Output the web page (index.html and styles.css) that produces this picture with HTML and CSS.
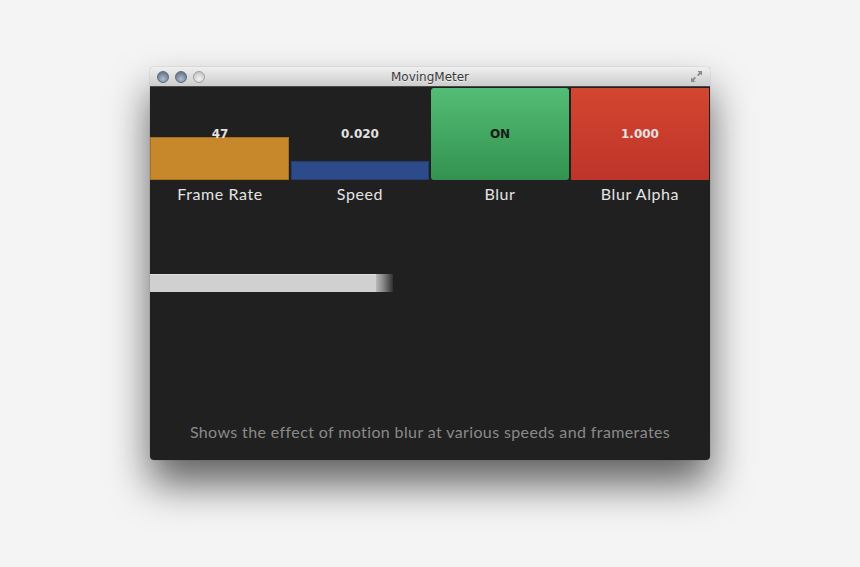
FILE: index.html
```html
<!DOCTYPE html>
<html lang="en">
<head>
    <meta charset="UTF-8">
    <title>MovingMeter</title>
    <link rel="stylesheet" href="styles.css">
</head>
<body>

<div class="window">
    <div class="titlebar">
        <div class="lights">
            <span class="light"></span>
            <span class="light"></span>
            <span class="light off"></span>
        </div>
        <div class="title">MovingMeter</div>
        <div class="resize">
            <svg width="13" height="13" viewBox="0 0 13 13">
                <path d="M7.5 1h4.5v4.5l-1.5-1.5-2.2 2.2-1.3-1.3 2.2-2.2z" fill="#8a8a8a"/>
                <path d="M5.5 12H1V7.5l1.5 1.5 2.2-2.2 1.3 1.3-2.2 2.2z" fill="#8a8a8a"/>
            </svg>
        </div>
    </div>

    <div class="content">
        <div class="meters">
            <div class="meter">
                <div class="cell">
                    <div class="bar bar-rate"></div>
                    <div class="value">47</div>
                </div>
                <div class="label">Frame Rate</div>
            </div>
            <div class="meter">
                <div class="cell">
                    <div class="bar bar-speed"></div>
                    <div class="value">0.020</div>
                </div>
                <div class="label">Speed</div>
            </div>
            <div class="meter">
                <div class="cell">
                    <div class="bar bar-blur"></div>
                    <div class="value dark">ON</div>
                </div>
                <div class="label">Blur</div>
            </div>
            <div class="meter">
                <div class="cell">
                    <div class="bar bar-alpha"></div>
                    <div class="value">1.000</div>
                </div>
                <div class="label">Blur Alpha</div>
            </div>
        </div>

        <div class="mover">
            <div class="mover-body"></div>
            <div class="mover-trail"></div>
        </div>

        <p class="caption">Shows the effect of motion blur at various speeds and framerates</p>
    </div>
</div>

</body>
</html>
```

FILE: styles.css
```css
body {
    margin: 0;
    background-color: #f4f4f4;
    font-family: 'Lato', 'DejaVu Sans', sans-serif;
    height: 567px;
    overflow: hidden;
}

.window {
    width: 560px;
    margin: 67px auto 0 auto;
    border-radius: 4px;
    box-shadow: 0 24px 40px rgba(0,0,0,0.6), 0 0 1px rgba(0,0,0,0.5);
}

.titlebar {
    height: 19px;
    border-radius: 4px 4px 0 0;
    background: linear-gradient(#efefef, #cdcdcd);
    border-bottom: 1px solid #4a4a4a;
    display: flex;
    align-items: center;
    padding: 0 7px;
}

.lights {
    display: flex;
    gap: 6px;
    width: 80px;
}

.light {
    width: 12px;
    height: 12px;
    border-radius: 50%;
    box-sizing: border-box;
    border: 1px solid #5f6a78;
    background: radial-gradient(circle at 50% 70%, #aebccd, #76879c 60%, #5a687a);
}

.light.off {
    border-color: #a0a0a0;
    background: radial-gradient(circle at 50% 70%, #f2f2f2, #d2d2d2 60%, #b4b4b4);
}

.title {
    flex: 1;
    text-align: center;
    font-family: 'DejaVu Sans', sans-serif;
    font-size: 12px;
    padding-top: 1px;
    color: #3a3a3a;
    text-shadow: 0 1px 0 rgba(255,255,255,0.6);
}

.resize {
    width: 80px;
    display: flex;
    justify-content: flex-end;
}

.content {
    height: 373px;
    background-color: #202020;
    border-radius: 0 0 4px 4px;
    display: flex;
    flex-direction: column;
}

.meters {
    display: flex;
}

.meter {
    width: 140px;
}

.cell {
    height: 93px;
    display: grid;
}

.cell > * {
    grid-area: 1 / 1;
}

.bar {
    align-self: end;
    box-sizing: border-box;
}

.bar-rate {
    height: 43px;
    margin-right: 1px;
    background-color: #c6882a;
    border: 1px solid #a9701c;
}

.bar-speed {
    height: 19px;
    margin: 0 1px;
    background-color: #2d4a8b;
    border: 1px solid #243c72;
}

.bar-blur {
    height: 92px;
    margin: 0 1px;
    border-radius: 3px;
    background: linear-gradient(#52bd75, #33924f);
}

.bar-alpha {
    height: 92px;
    margin: 0 1px;
    background: linear-gradient(#d3462f, #be342a);
}

.value {
    align-self: start;
    justify-self: center;
    margin-top: 40px;
    font-family: 'DejaVu Sans', sans-serif;
    font-size: 12px;
    font-weight: bold;
    line-height: 14px;
    color: #e2e2e2;
}

.value.dark {
    color: #1a1a1a;
}

.label {
    text-align: center;
    font-size: 16px;
    letter-spacing: 0.6px;
    line-height: 28px;
    color: #e4e4e4;
}

.mover {
    display: flex;
    margin-top: 66px;
    height: 18px;
}

.mover-body {
    width: 226px;
    background-color: #d0d0d0;
    border-top: 1px solid #e0e0e0;
    box-sizing: border-box;
}

.mover-trail {
    width: 17px;
    background: linear-gradient(to right, #b8b8b8, #8a8a8a 40%, #303030);
}

.caption {
    margin: auto 0 18px 0;
    text-align: center;
    font-size: 16px;
    letter-spacing: 0.38px;
    line-height: 20px;
    color: #8a8a8a;
}
```
